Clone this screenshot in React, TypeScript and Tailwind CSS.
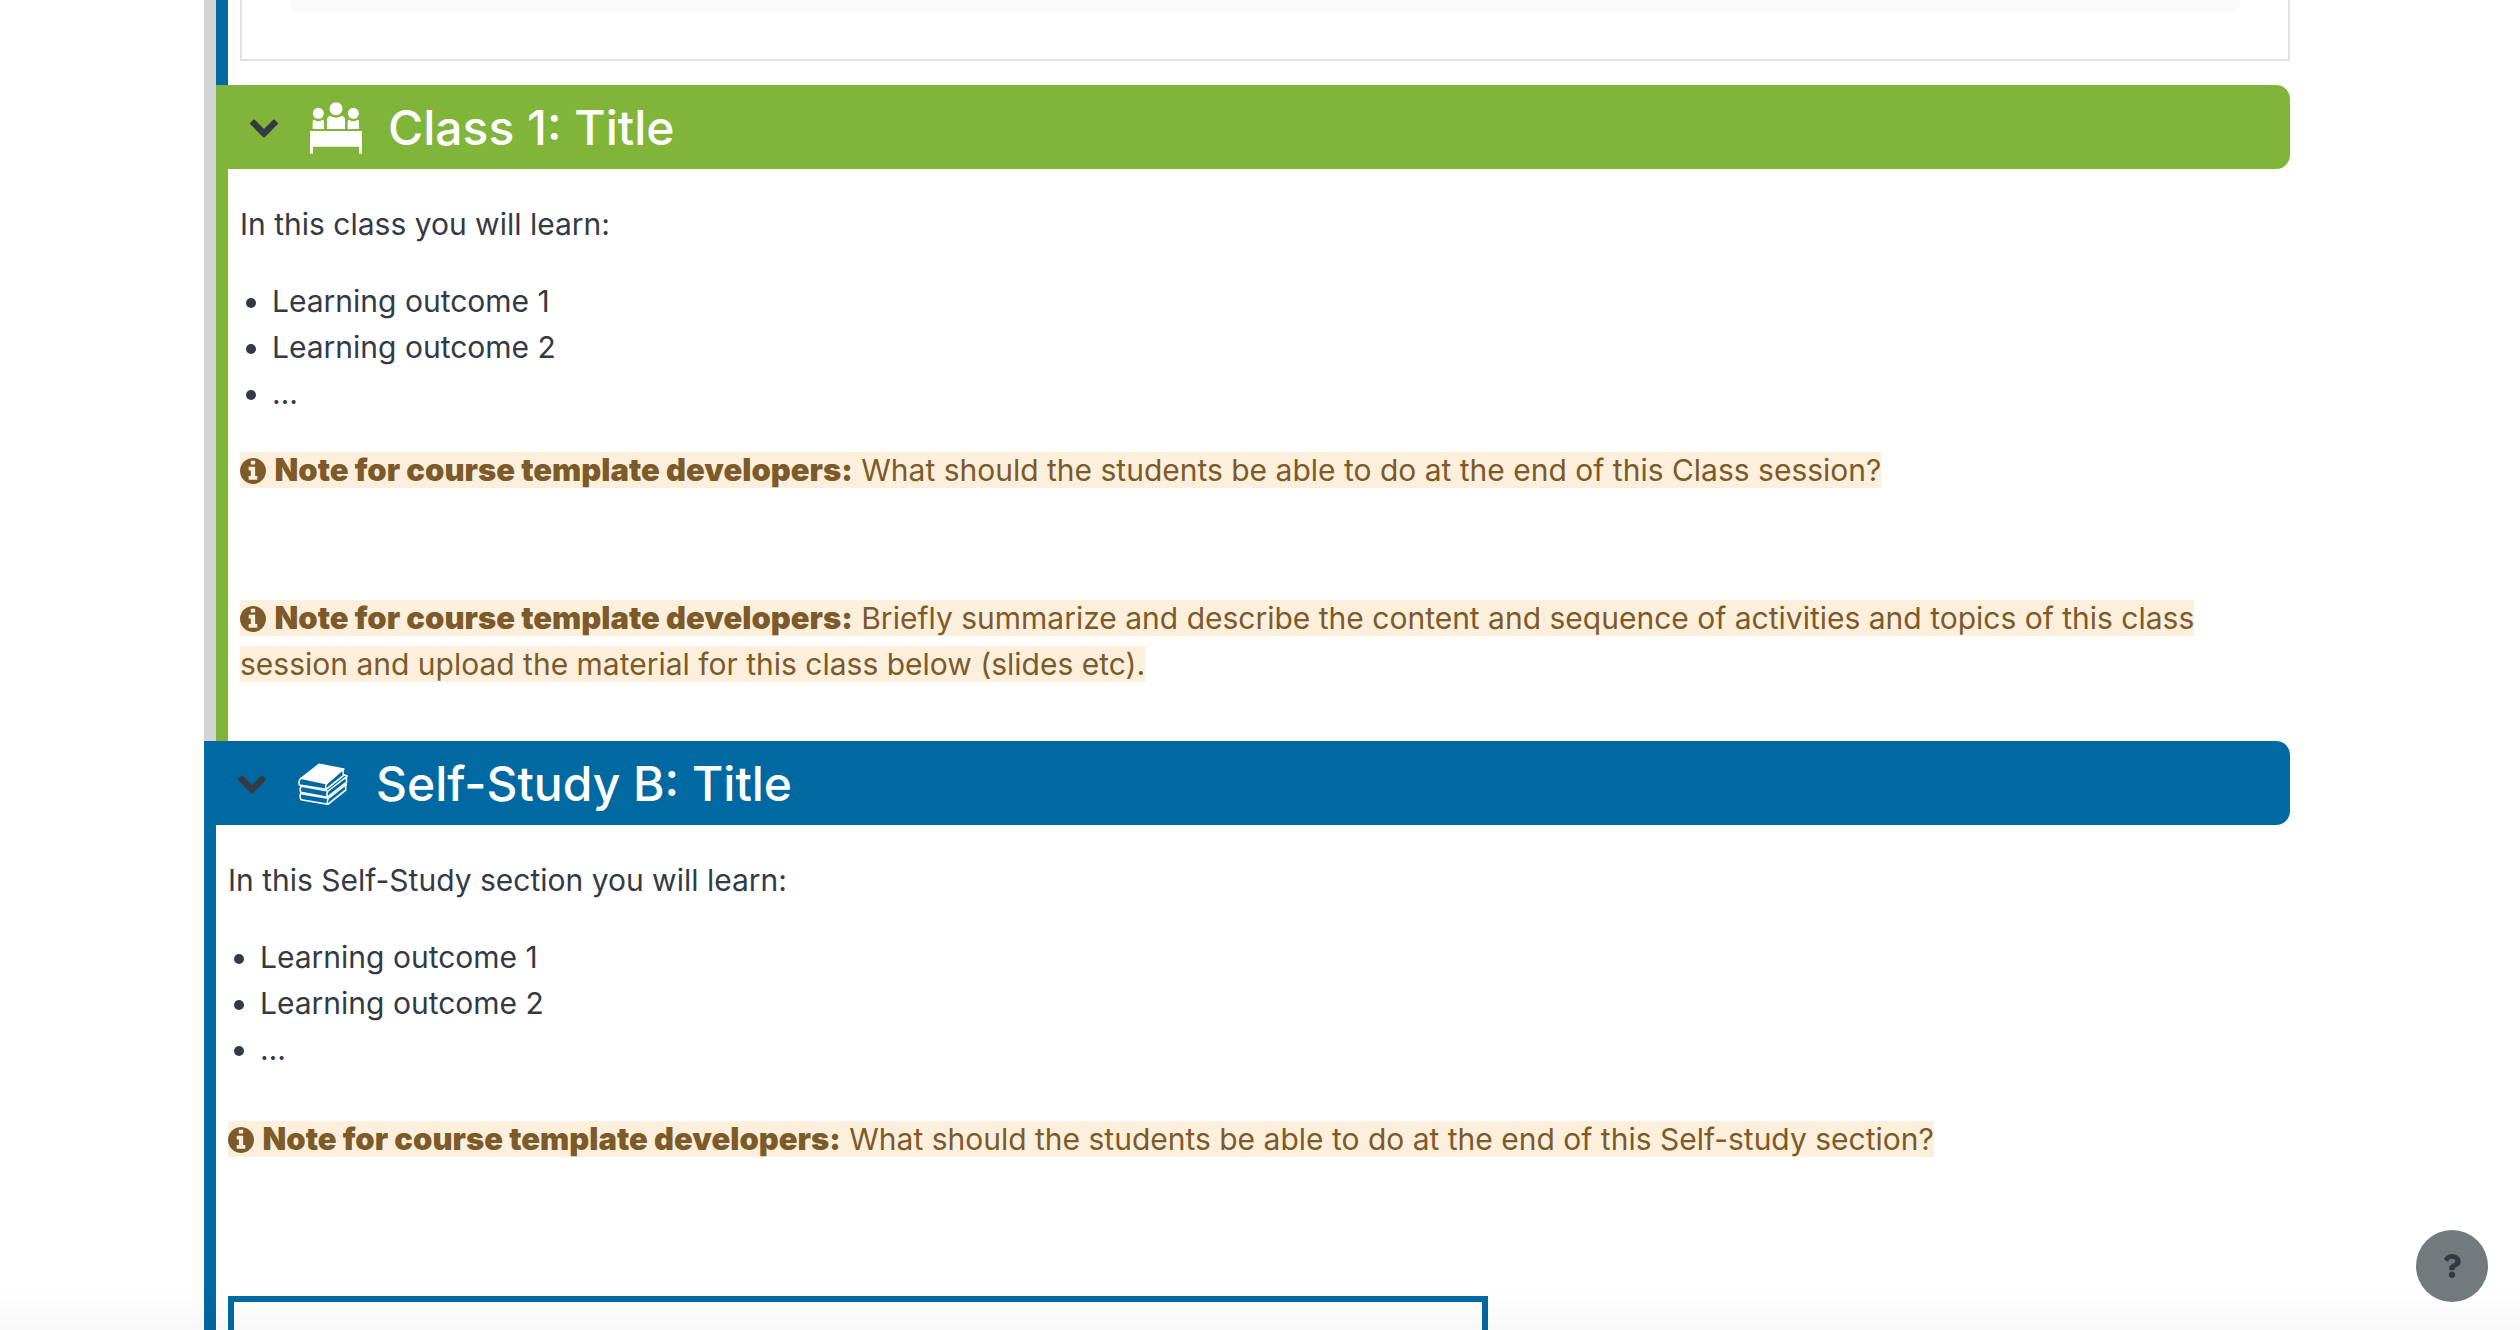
import React from "react";
import { FaQuestion } from "react-icons/fa";

function ChevronIcon() {
  return (
    <svg viewBox="90 533 1612 1035" className="ml-[14px] h-[19px] w-7" fill="currentColor" aria-hidden="true">
      <path d="M1683 808l-742 741q-19 19-45 19t-45-19l-742-741q-19-19-19-45.500t19-45.500l166-165q19-19 45-19t45 19l531 531 531-531q19-19 45-19t45 19l166 165q19 19 19 45.500t-19 45.500z" />
    </svg>
  );
}

function InfoIcon() {
  return (
    <svg viewBox="128 128 1536 1536" className="inline size-[26px] align-[-3px]" fill="currentColor" aria-hidden="true">
      <path d="M1152 1376v-160q0-14-9-23t-23-9h-96v-512q0-14-9-23t-23-9h-320q-14 0-23 9t-9 23v160q0 14 9 23t23 9h96v320h-96q-14 0-23 9t-9 23v160q0 14 9 23t23 9h448q14 0 23-9t9-23zM1024 480v-160q0-14-9-23t-23-9h-192q-14 0-23 9t-9 23v160q0 14 9 23t23 9h192q14 0 23-9t9-23zM1664 896q0 209-103 385.500t-279.500 279.500t-385.500 103t-385.500-103t-279.500-279.500t-103-385.500t103-385.500t279.500-279.500t385.500-103t385.500 103t279.500 279.500t103 385.500z" />
    </svg>
  );
}

function ClassIcon() {
  return (
    <svg viewBox="30 22 156 154" className="size-[52px]" fill="currentColor" aria-hidden="true">
      <circle cx="108" cy="41" r="19.500" />
      <circle cx="55" cy="55" r="16.500" />
      <circle cx="160" cy="55" r="16.500" />
      <path d="M38 102V80q0-6 5-6q12 9 24 0q5 0 5 6v22zM143 102V80q0-6 5-6q12 9 24 0q5 0 5 6v22zM81 102V74q0-9 9-12q18 12 36 0q9 3 9 12v28zM30 108h156v68h-9v-21H39v21h-9z" />
    </svg>
  );
}

function BooksIcon() {
  return (
    <svg
      viewBox="27 22 150 126"
      className="h-[42px] w-[50px]"
      fill="none"
      stroke="currentColor"
      strokeWidth="4.500"
      strokeLinejoin="round"
      strokeLinecap="round"
      aria-hidden="true"
    >
      <path d="M36 68L90 26L164 40L113 84Z" fill="currentColor" />
      <path d="M36 68Q27 74 31 88L111 101Q108 92 113 84M111 101L164 59Q160 52 164 40" />
      <path d="M37 91Q31 98 35 110L115 125Q111 115 117 106L38 92M117 106L174 62Q170 70 173 80L115 125M166 58L174 60" />
      <path d="M36 113Q30 120 36 132L117 146Q113 137 118 128L37 114M118 128L172 86Q168 94 171 103L117 146" />
      <path d="M120 96L161 63M121 118L168 81M122 139L166 104" strokeWidth="2" />
    </svg>
  );
}

type HeaderProps = { title: string; icon: React.ReactNode; color: string };

function SectionHeader({ title, icon, color }: HeaderProps) {
  return (
    <header className={`flex h-[84px] items-center rounded-r-[14px] pt-0.5 pl-5 text-white ${color}`}>
      <button type="button" aria-label={`Collapse ${title}`} className="w-[54px] text-[#343a45]">
        <ChevronIcon />
      </button>
      <span className="mr-6 ml-5 w-[54px]">{icon}</span>
      <h2 className="text-5xl leading-[60px] font-medium">{title}</h2>
    </header>
  );
}

function Outcomes() {
  return (
    <ul className="mt-[31px] list-disc pl-8">
      <li>Learning outcome 1</li>
      <li>Learning outcome 2</li>
      <li>…</li>
    </ul>
  );
}

function Note({ children }: { children: React.ReactNode }) {
  return (
    <span className="bg-[#fcefdc] text-[#7d5a29]">
      <InfoIcon /> <strong className="text-[31px] font-black">Note for course template developers:</strong>{" "}
      {children}
    </span>
  );
}

export default function App() {
  return (
    <div className="relative h-screen overflow-hidden bg-white pr-[230px] pl-[204px] font-['Inter',sans-serif] text-[30px] leading-[46px] text-[#343a45]">
      <div className="border-l-12 border-[#d2d5d4]">
        <div className="border-l-12 border-[#0069a1] pb-6 pl-3">
          <div className="border-2 border-t-0 border-[#dee2e6] px-12 pb-[47px]">
            <div className="h-3 rounded-b-lg bg-[#fafafa]" />
          </div>
        </div>
        <section>
          <SectionHeader title="Class 1: Title" icon={<ClassIcon />} color="bg-[#80b539]" />
          <div className="border-l-12 border-[#80b539] pt-8 pb-[54px] pl-3">
            <p>In this class you will learn:</p>
            <Outcomes />
            <p className="mt-[31px]">
              <Note>What should the students be able to do at the end of this Class session?</Note>
            </p>
            <p className="mt-[102px]">
              <Note>
                Briefly summarize and describe the content and sequence of activities and topics of this class session
                and upload the material for this class below (slides etc).
              </Note>
            </p>
          </div>
        </section>
      </div>
      <section>
        <SectionHeader title="Self-Study B: Title" icon={<BooksIcon />} color="bg-[#0069a1]" />
        <div className="border-l-12 border-[#0069a1] pt-8 pl-3">
          <p>In this Self-Study section you will learn:</p>
          <Outcomes />
          <p className="mt-11">
            <Note>What should the students be able to do at the end of this Self-study section?</Note>
          </p>
          <div className="mt-[134px] h-32 w-[1260px] border-6 border-[#0069a1]" />
        </div>
      </section>
      <div className="pointer-events-none absolute inset-x-0 bottom-0 h-10 bg-linear-to-b from-transparent to-black/3" />
      <button
        type="button"
        aria-label="Help"
        className="absolute right-8 bottom-7 flex size-[72px] items-center justify-center rounded-full bg-[#737a7c]"
      >
        <FaQuestion className="size-6" />
      </button>
    </div>
  );
}
